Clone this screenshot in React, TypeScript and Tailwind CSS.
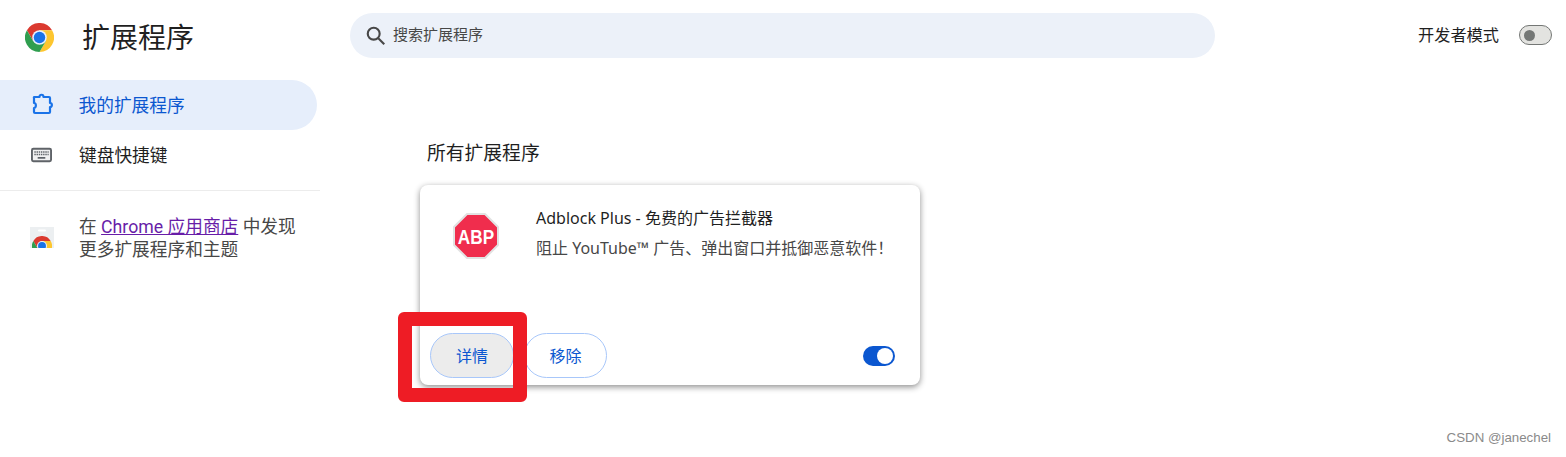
const FONT = "font-['Noto_Sans','Noto_Sans_CJK_SC',sans-serif]";

function ChromeLogoInner() {
  return (
    <>
      <path d="M3.2 12A24 24 0 0 1 44.8 12H24L13.6 30Z" fill="#db3a2f" />
      <path d="M44.8 12A24 24 0 0 1 24 48L34.4 30L24 12Z" fill="#fdc62f" />
      <path d="M24 48A24 24 0 0 1 3.2 12L13.6 30H34.4Z" fill="#2f9e4f" />
      <circle cx="24" cy="24" r="12" fill="#e8f0fe" />
      <circle cx="24" cy="24" r="9.5" fill="#1a73e8" />
    </>
  );
}

function StoreIcon() {
  return (
    <svg viewBox="0 0 24 22" className="h-[22px] w-6">
      <rect width="24" height="21" fill="#eceff1" />
      <rect x="8" y="2.5" width="8" height="2" rx="1" fill="#fff" />
      <svg x="2" y="9" width="20" height="12" viewBox="0 0 48 28.8">
        <ChromeLogoInner />
      </svg>
    </svg>
  );
}

function PuzzleIcon() {
  return (
    <svg viewBox="0 0 24 24" className="h-6 w-6" fill="none" stroke="#1a73e8" strokeWidth="2.2" strokeLinejoin="round">
      <path d="M4 4h5.500c0-3 4-3 4 0H19a1 1 0 0 1 1 1v5c2.500 0 2.500 4 0 4v5a1 1 0 0 1-1 1H5a1 1 0 0 1-1-1v-4c2.500 0 2.500-5 0-5V5a1 1 0 0 1 0-1z" />
    </svg>
  );
}

function KeyboardIcon() {
  return (
    <svg viewBox="0 0 22 16" className="h-4 w-[21px]">
      <rect x="1" y="1.500" width="20" height="13" rx="1.500" fill="#f1f1f1" stroke="#5f6368" strokeWidth="2" />
      <path d="M3.500 4.800h15M3.500 7.500h15" stroke="#5f6368" strokeWidth="1.500" strokeDasharray="1.500 0.800" />
      <path d="M7 11h8" stroke="#5f6368" strokeWidth="1.800" />
    </svg>
  );
}

function AbpIcon() {
  return (
    <svg viewBox="0 0 46 46" className="mt-[6px] h-[46px] w-[46px]">
      <path d="M14 1H32L45 14V32L32 45H14L1 32V14Z" fill="#f02d4d" stroke="#e2e2e2" strokeWidth="2" strokeLinejoin="round" />
      <text transform="translate(23 30.500) scale(0.86 1)" textAnchor="middle" fontFamily="Liberation Sans" fontWeight="700" fontSize="20" fill="#fff">
        ABP
      </text>
    </svg>
  );
}

export default function App() {
  return (
    <div className={`relative h-[457px] overflow-hidden bg-white text-[#1f1f1f] ${FONT}`}>
      {/* top bar */}
      <header className="flex h-[70px] items-start">
        <div className="flex w-[350px] items-center pt-[14px]">
          <svg viewBox="0 0 48 48" className="ml-[25px] h-[29px] w-[29px]">
            <ChromeLogoInner />
          </svg>
          <h1 className="ml-[28px] text-[28px] leading-[46px]">扩展程序</h1>
        </div>
        <div className="mt-[13px] flex h-[45px] w-[865px] items-center rounded-full bg-[#ecf1f9] pl-[15px] text-[15px] text-[#474747]">
          <svg viewBox="0 0 24 24" className="h-[22px] w-[22px]" fill="none" stroke="#474747" strokeWidth="2.300">
            <circle cx="9.500" cy="9.500" r="6.500" />
            <path d="M14.500 14.500L21 21" />
          </svg>
          <span className="ml-[6px] -translate-y-px">搜索扩展程序</span>
        </div>
        <div className="ml-auto mt-[24px] flex items-center pr-[14px]">
          <span className="text-[16.200px] leading-[22px]">开发者模式</span>
          <div className="ml-[20px] flex h-[20px] w-[33px] items-center rounded-full border border-[#747775] bg-[#e3e3e0] pl-[4px]">
            <div className="h-[11px] w-[11px] rounded-full bg-[#747775]" />
          </div>
        </div>
      </header>

      <div className="flex">
        {/* sidebar */}
        <aside className="mt-[10px] w-[320px] shrink-0">
          <div className="flex h-[50px] w-[317px] items-center rounded-r-full bg-[#e6eefb] pl-[30px] text-[17.700px] text-[#0b57d0]">
            <PuzzleIcon />
            <span className="ml-[24.500px]">我的扩展程序</span>
          </div>
          <div className="flex h-[50px] items-center pl-[31px] text-[17.700px]">
            <KeyboardIcon />
            <span className="ml-[27px]">键盘快捷键</span>
          </div>
          <div className="mt-[10px] border-t border-[#ececec]" />
          <div className="flex items-center pl-[30px] pt-[24px] font-['Roboto','Noto_Sans_CJK_SC',sans-serif] text-[17.700px] leading-[23px] text-[#474747]">
            <StoreIcon />
            <p className="ml-[25px] translate-y-px">
              在 <span className="text-[#681da8] underline">Chrome 应用商店</span> 中发现
              <br />
              更多扩展程序和主题
            </p>
          </div>
        </aside>

        {/* main */}
        <main className="pl-[100px] pt-[68px]">
          <h2 className="pl-[7px] text-[18.800px] leading-[30px]">所有扩展程序</h2>
          <div className="mt-[17px] flex h-[200px] w-[500px] flex-col rounded-lg bg-white shadow-[0_2px_6px_rgba(0,0,0,0.45)]">
            <div className="flex flex-1 pl-[33px] pt-[22px]">
              <AbpIcon />
              <div className="ml-[37px]">
                <div className="text-[16px] leading-[22px]">Adblock Plus - 免费的广告拦截器</div>
                <div className="mt-[8px] text-[16px] leading-[22px] text-[#474747]">阻止 YouTube™ 广告、弹出窗口并抵御恶意软件！</div>
              </div>
            </div>
            <div className="flex items-center px-[10px] pb-[7px]">
              <button className="h-[45px] w-[84px] rounded-full border border-[#a8c7fa] bg-[#ececec] text-[16px] text-[#0b57d0]">详情</button>
              <button className="ml-[10px] h-[45px] w-[83px] rounded-full border border-[#a8c7fa] text-[16px] text-[#0b57d0]">移除</button>
              <div className="ml-auto mr-[15px] flex h-[20px] w-[32px] items-center justify-end rounded-full bg-[#0b57d0] pr-[2px]">
                <div className="h-[16px] w-[16px] rounded-full bg-white" />
              </div>
            </div>
          </div>
        </main>
      </div>

      {/* annotation drawn over the screenshot */}
      <div className="absolute left-[398px] top-[312px] h-[90px] w-[129px] rounded-[6px] border-[14px] border-[#ee1c25]" />
      <div className="absolute bottom-[9px] right-[15px] font-['Liberation_Sans'] text-[13.300px] text-[#8a8a8a]">CSDN @janechel</div>
    </div>
  );
}
